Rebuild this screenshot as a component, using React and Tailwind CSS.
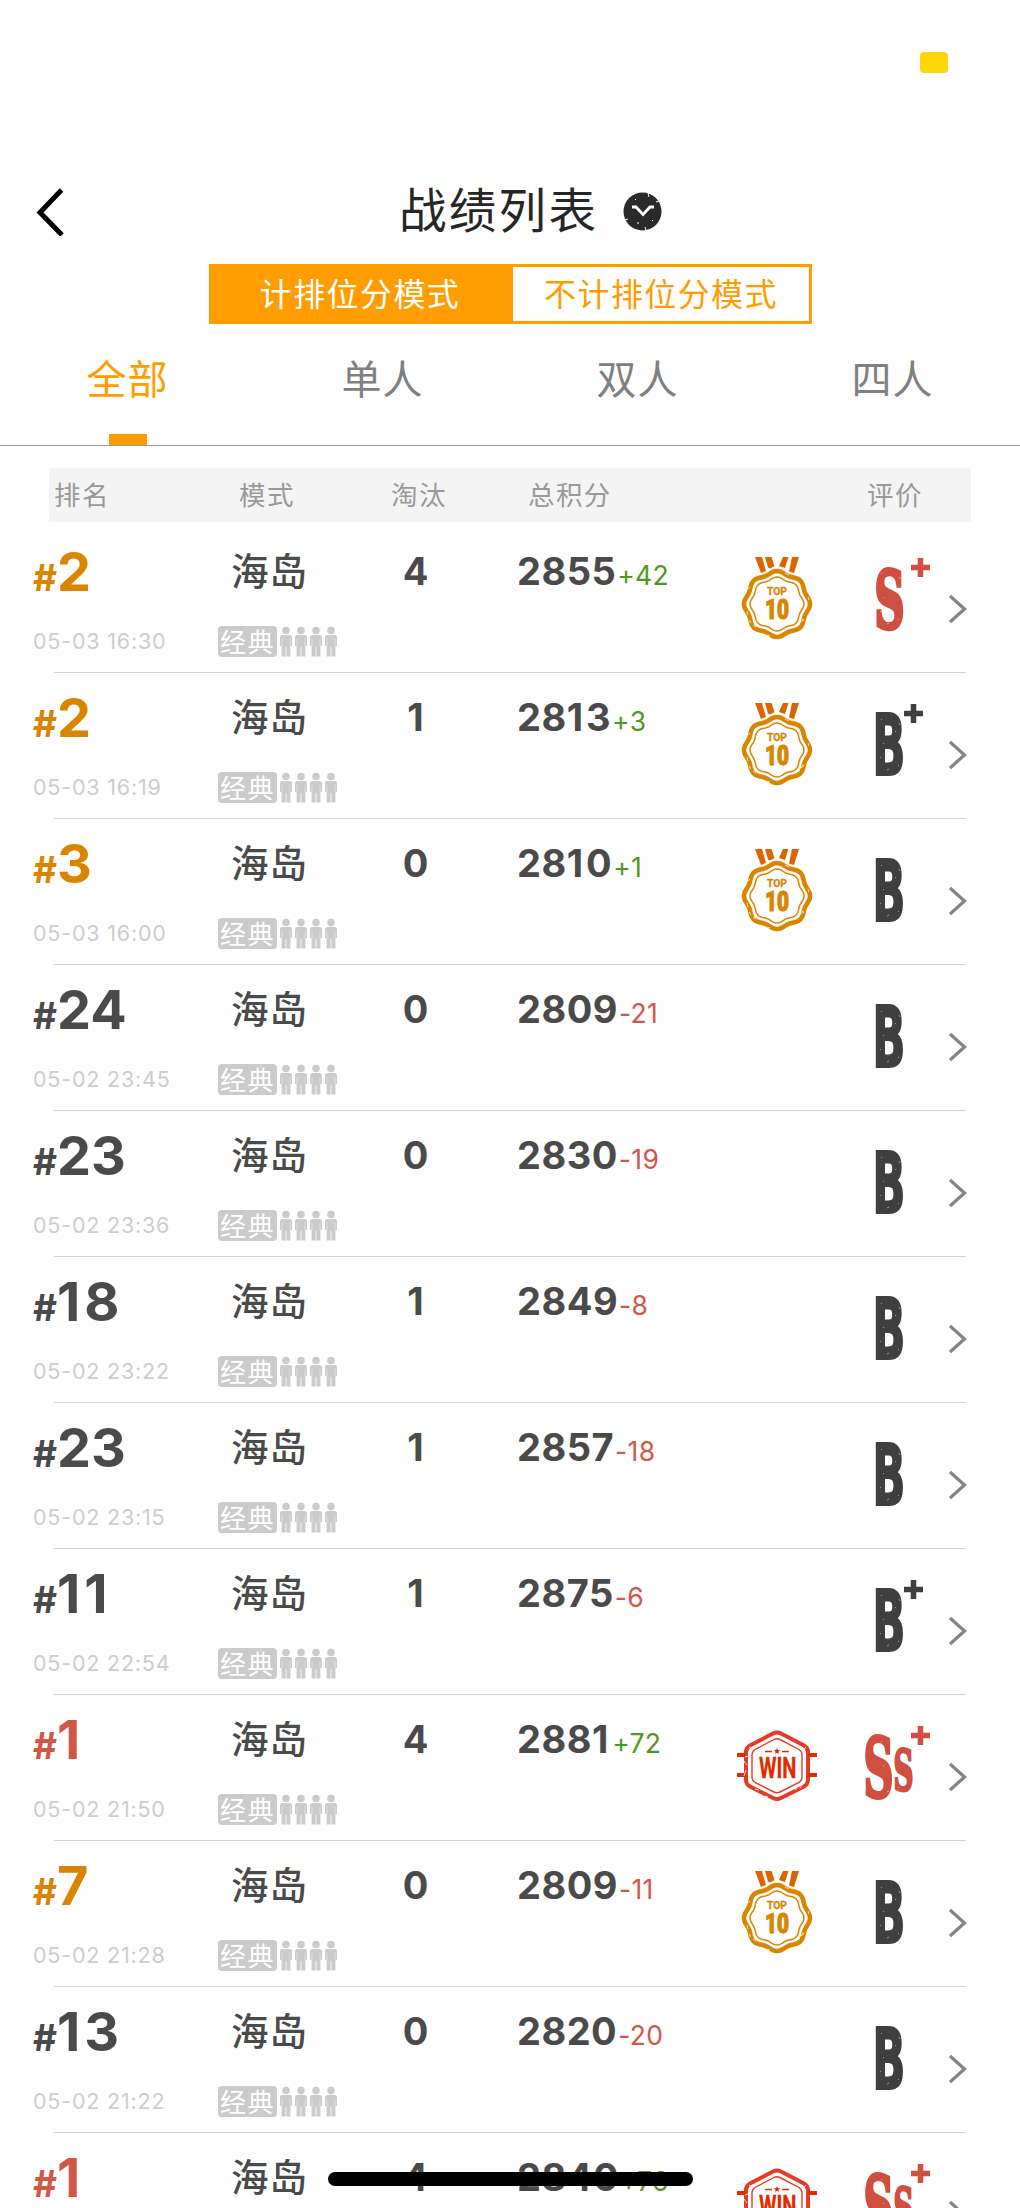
import React from "react";

const matches = [
  { rank: 2, time: "05-03 16:30", kills: 4, score: 2855, delta: 42, medal: "top10", grade: "S+" },
  { rank: 2, time: "05-03 16:19", kills: 1, score: 2813, delta: 3, medal: "top10", grade: "B+" },
  { rank: 3, time: "05-03 16:00", kills: 0, score: 2810, delta: 1, medal: "top10", grade: "B" },
  { rank: 24, time: "05-02 23:45", kills: 0, score: 2809, delta: -21, grade: "B" },
  { rank: 23, time: "05-02 23:36", kills: 0, score: 2830, delta: -19, grade: "B" },
  { rank: 18, time: "05-02 23:22", kills: 1, score: 2849, delta: -8, grade: "B" },
  { rank: 23, time: "05-02 23:15", kills: 1, score: 2857, delta: -18, grade: "B" },
  { rank: 11, time: "05-02 22:54", kills: 1, score: 2875, delta: -6, grade: "B+" },
  { rank: 1, time: "05-02 21:50", kills: 4, score: 2881, delta: 72, medal: "win", grade: "SS+" },
  { rank: 7, time: "05-02 21:28", kills: 0, score: 2809, delta: -11, medal: "top10", grade: "B" },
  { rank: 13, time: "05-02 21:22", kills: 0, score: 2820, delta: -20, grade: "B" },
  { rank: 1, time: "05-02 20:58", kills: 4, score: 2840, delta: 76, medal: "win", grade: "SS+" },
];

const tabs = ["全部", "单人", "双人", "四人"];

// closed outline with eight soft lobes, used for the medal rim
function rimPath(cx, cy, r, wave) {
  const points = [];
  for (let i = 0; i < 96; i++) {
    const a = (i / 96) * Math.PI * 2;
    const rr = r + wave * Math.cos(a * 8);
    points.push(`${(cx + rr * Math.cos(a)).toFixed(2)} ${(cy + rr * Math.sin(a)).toFixed(2)}`);
  }
  return `M${points.join("L")}Z`;
}

function rankColor(rank) {
  if (rank === 1) return "text-[#d15747]";
  if (rank <= 10) return "text-[#d98500]";
  return "text-[#4a4a4a]";
}

function Top10Medal() {
  return (
    <svg width="100" height="145" viewBox="0 0 100 145">
      <g fill="#dc6400">
        <path d="M28 30h7l4 14-5 2z" />
        <path d="M38 30h6.500l3 9-4.500 2.500-2 -1z" />
        <path d="M56 30h5.500l-3.500 11-6-2z" />
        <path d="M65 30h7l-5 16-5-1.500z" />
      </g>
      <path d={rimPath(50, 77, 31.6, 1.4)} fill="none" stroke="#d98500" strokeWidth="4.600" />
      <path d={rimPath(50, 77, 25.8, 1.2)} fill="none" stroke="#d98500" strokeWidth="1.500" />
      <path
        d="M73 95l4-2M69 99l3-2M75 92l2 1M22 93l2 3M26 98l3 2M21 62l2-2M58 46l4 2M81 70l1 3M40 108l3 1M20 84l1 4"
        stroke="#fefefe"
        strokeWidth="0.900"
        opacity="0.8"
      />
      <g fill="#d98500" stroke="#d98500" fontFamily="Roboto, sans-serif">
        <text x="40" y="68.200" fontSize="11.200" fontWeight="700" strokeWidth="0.300" textLength="20" lengthAdjust="spacingAndGlyphs">
          TOP
        </text>
        <text x="38" y="91.500" fontSize="28" fontWeight="900" strokeWidth="1.200" textLength="24" lengthAdjust="spacingAndGlyphs">
          10
        </text>
      </g>
    </svg>
  );
}

function WinMedal() {
  return (
    <svg width="100" height="145" viewBox="0 0 100 145">
      <path
        d="M46 38.500Q50 36.500 54 38.500L77 50.500Q81 53 81 57V85Q81 89 77 91.500L54 103Q50 105 46 103L23 91.500Q19 89 19 85V57Q19 53 23 50.500Z"
        fill="none"
        stroke="#e53a26"
        strokeWidth="4"
      />
      <path
        d="M47 44.500Q50 43 53 44.500L72 54.500Q75 56.500 75 59.500V82Q75 85.500 72 87.500L53 97Q50 98.500 47 97L28 87.500Q25 85.500 25 82V59.500Q25 56.500 28 54.500Z"
        fill="none"
        stroke="#e53a26"
        strokeWidth="1.400"
      />
      <path d="M10 60h9M10 80h9M81 60h9M81 80h9" stroke="#e12c00" strokeWidth="4" />
      <path d="M38 56.500h7M55 56.500h7" stroke="#e12c00" strokeWidth="1.500" />
      <path d="M50 53l.9 2.100 2.300.1-1.800 1.500.6 2.200-2-1.200-2 1.200.6-2.200-1.800-1.500 2.300-.1z" fill="#e12c00" />
      <path
        d="M17 66l3 4M19 75l-2 6M22 85l3 3M18 62l3-1M68 95l3-4M73 93l2-3M28 94l4 1M22 52l3 2M38 101l3 1M79 52l-2 2"
        stroke="#fefefe"
        strokeWidth="1"
        opacity="0.85"
      />
      <text
        x="32"
        y="83"
        fill="#e12c00"
        stroke="#e12c00"
        strokeWidth="0.300"
        fontFamily="Roboto, sans-serif"
        fontSize="29.500"
        fontWeight="700"
        textLength="37.500"
        lengthAdjust="spacingAndGlyphs"
      >
        WIN
      </text>
    </svg>
  );
}

function Letter({ char, font, x, y, size, width, weight = 3, color }) {
  return (
    <text
      x={x}
      y={y}
      fill={color}
      stroke={color}
      strokeWidth={weight}
      fontFamily={font}
      fontSize={size}
      fontWeight="700"
      textLength={width}
      lengthAdjust="spacingAndGlyphs"
    >
      {char}
    </text>
  );
}

function Plus({ x, y, color }) {
  return <path d={`M${x} ${y}h19M${x + 9.5} ${y - 9.5}v19`} stroke={color} strokeWidth="5.500" />;
}

const SERIF = "DejaVu Serif, serif";
const MONO = "DejaVu Sans Mono, monospace";

function Grade({ grade }) {
  const color = grade[0] === "S" ? "#cf4f41" : "#3f3f3f";
  return (
    <svg className="overflow-visible" width="80" height="145" viewBox="0 0 80 145">
      {grade === "SS+" && (
        <>
          <Letter char="S" font={SERIF} x="6.500" y="102" size="82" width="30" weight={4} color={color} />
          <Letter char="S" font={SERIF} x="36.500" y="94.500" size="56" width="20" color={color} />
        </>
      )}
      {grade === "S+" && <Letter char="S" font={SERIF} x="17.500" y="101" size="79" width="30" weight={4.5} color={color} />}
      {grade[0] === "B" && <Letter char="B" font={MONO} x="17" y="101" size="82" width="29.500" weight={4} color={color} />}
      {grade === "B+" && <Plus x={47} y={40.5} color={color} />}
      {grade[0] === "S" && <Plus x={54} y={40.5} color={color} />}
      <path
        d="M24 46l1 1M42 50l1 2M38 58l1 1M23 84l1 1M30 97l2-1M41 92l1 1M26 70l1 1"
        stroke="#fefefe"
        strokeWidth="0.800"
        opacity="0.6"
      />
    </svg>
  );
}

function Person() {
  return (
    <svg width="12" height="31" viewBox="0 0 12 31" fill="#cbcbcb">
      <circle cx="6" cy="4.500" r="3.800" />
      <path d="M2.500 9h7q2.500 0 2.500 2.500V20h-1.600v10.500H6.400V21H5.600v9.500H1.600V20H0v-8.500Q0 9 2.500 9z" />
      <path d="M2 13v7M10 13v7" stroke="#fefefe" strokeWidth="0.400" />
    </svg>
  );
}

// a bold "1" is narrow, so it gets a little extra room
function Digits({ value, gap }) {
  return String(value)
    .split("")
    .map((digit, i) => (
      <span key={i} className={digit === "1" ? gap : ""}>
        {digit}
      </span>
    ));
}

function MatchRow({ match }) {
  const { rank, time, kills, score, delta, medal, grade } = match;
  return (
    <li>
      <div className="flex h-[145px] pl-[33px]">
        <div className="w-[184px] shrink-0 pt-[18px]">
          <div className={`flex items-baseline font-bold leading-[54px] ${rankColor(rank)}`}>
            <span className="text-[37px]">#</span>
            <span className="text-[54px]">
              <Digits value={rank} gap="mr-1" />
            </span>
          </div>
          <div className="mt-[25px] whitespace-nowrap text-[21.500px] leading-[22px] tracking-[0.8px] text-[#cdcdcd]">
            {time}
          </div>
        </div>
        <div className="w-[151px] shrink-0 pl-px pt-[22px] font-['Noto_Sans_CJK_SC',sans-serif]">
          <div className="pl-[13px] text-[37.500px] font-medium leading-10 tracking-[1px] text-[#4a4a4a]">海岛</div>
          <div className="mt-[37px] flex items-center gap-[3px]">
            <span className="h-[31px] w-[59px] rounded bg-[#cbcbcb] pl-0.5 text-[26px] leading-[29px] tracking-[1.5px] text-white">
              经典
            </span>
            <Person />
            <Person />
            <Person />
            <Person />
          </div>
        </div>
        <div className="w-[95px] shrink-0 pt-[25px] text-center text-[38px] font-bold leading-[38px] text-[#4a4a4a]">
          {kills}
        </div>
        <div className="flex w-[264px] shrink-0 items-baseline pl-[54px] pt-[25px] leading-[38px]">
          <span className="text-[38px] font-bold tracking-[0.5px] text-[#4a4a4a]">
            <Digits value={score} gap="mr-[2.500px]" />
          </span>
          <span className={`ml-px text-[26.500px] tracking-[0.3px] ${delta > 0 ? "text-[#4d9a22]" : "text-[#d15747]"}`}>
            {delta > 0 ? `+${delta}` : delta}
          </span>
        </div>
        <div className="w-[130px] shrink-0">
          {medal === "top10" && <Top10Medal />}
          {medal === "win" && <WinMedal />}
        </div>
        <Grade grade={grade} />
        <svg className="ml-3" width="18" height="145" viewBox="0 0 18 145" fill="none" stroke="#858585" strokeWidth="3.200">
          <path d="M1 69l14.500 13L1 95" />
        </svg>
      </div>
      <div className="mx-[54px] h-px bg-[#d4d4d4]" />
    </li>
  );
}

export default function App() {
  return (
    <div className="relative h-[2208px] w-[1020px] overflow-hidden bg-[#fefefe] font-['Inter','Noto_Sans_CJK_SC',sans-serif]">
      <div className="flex h-[170px] justify-end pr-[72px] pt-[52px]">
        <div className="h-[21px] w-7 rounded bg-[#ffd60a]" />
      </div>

      <header className="flex h-[82px] items-center pl-9">
        <svg width="30" height="50" viewBox="0 0 30 50" fill="none" stroke="#000" strokeWidth="5">
          <path d="M25.500 4L4 26.500l22 22.500" />
        </svg>
        <h1 className="ml-[333px] pb-[7px] font-['Noto_Sans_CJK_SC',sans-serif] text-[47.500px] leading-[47px] tracking-[2.300px] text-[#262626]">
          战绩列表
        </h1>
        <svg className="ml-[25px]" width="39" height="39" viewBox="0 0 39 39">
          <circle cx="19.500" cy="19.500" r="19" fill="#2a2a2a" />
          <path d="M9 15h4l7 7.500 7-7.500h4" fill="none" stroke="#fff" strokeWidth="2.800" />
          <path d="M25 1l1 4M36 9l-3 1M2 28l3-1M23 38l-1-3M12 7l1 1M29 28l1 1M15 30v2" stroke="#fefefe" strokeWidth="1" />
        </svg>
      </header>

      <div className="ml-[209px] mt-3 flex h-[60px] w-[603px] border-[3px] border-[#ff9c00] font-['Noto_Sans_CJK_SC',sans-serif] text-[32px] leading-[50px] tracking-[1.4px]">
        <button className="w-[301px] bg-[#ff9c00] pb-1.5 pr-[5px] text-white">计排位分模式</button>
        <button className="flex-1 pb-1.5 text-[#ff9c00]">不计排位分模式</button>
      </div>

      <nav className="grid h-[122px] grid-cols-4 border-b border-[#999] font-['Noto_Sans_CJK_SC',sans-serif]">
        {tabs.map((tab, i) => (
          <div key={tab} className="flex flex-col items-center justify-between pt-[33px]">
            <span className={`text-[40px] leading-10 tracking-[1px] ${i === 0 ? "text-[#ff9c00]" : "text-[#808080]"}`}>
              {tab}
            </span>
            {i === 0 && <span className="h-[11px] w-[38px] bg-[#ff9c00]" />}
          </div>
        ))}
      </nav>

      <div className="mx-[49px] mt-[22px] flex h-[54px] bg-[#f4f4f4] pl-[5px] font-['Noto_Sans_CJK_SC',sans-serif] text-[26.500px] leading-[51px] tracking-[1.4px] text-[#999]">
        <span className="w-[185px]">排名</span>
        <span className="w-[152px]">模式</span>
        <span className="w-[137px]">淘汰</span>
        <span className="w-[339px]">总积分</span>
        <span>评价</span>
      </div>

      <ul className="pt-[5px]">
        {matches.map((match, i) => (
          <MatchRow key={i} match={match} />
        ))}
      </ul>

      <div className="absolute left-[328px] top-[2172px] h-[14px] w-[365px] rounded-full bg-black" />
    </div>
  );
}
